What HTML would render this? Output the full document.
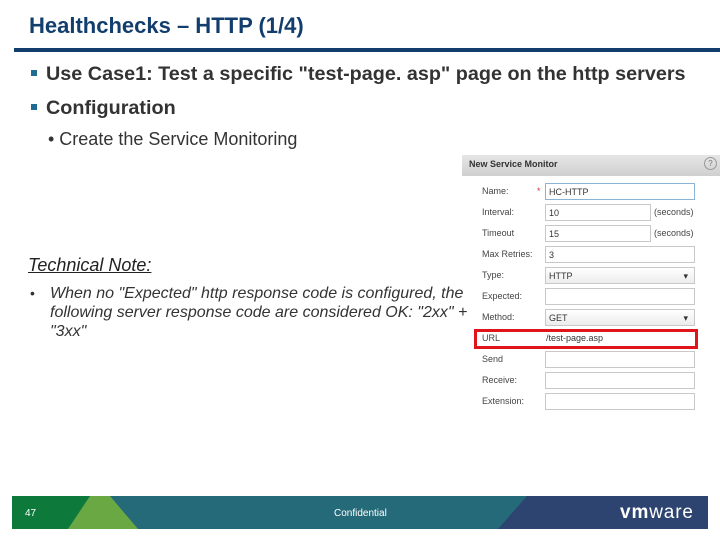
<!DOCTYPE html>
<html><head><style>
body{margin:0;width:720px;height:540px;background:#fff;position:relative;overflow:hidden;font-family:"Liberation Sans",Arial,sans-serif}
.a{position:absolute;white-space:nowrap}
.t{left:29px;top:13px;font-size:22px;font-weight:bold;color:#123e6e}
.ln{left:14px;top:48px;width:706px;height:4px;background:#123e6e}
.b1{font-size:19.8px;font-weight:bold;color:#333}
.sq{width:6px;height:6px;background:#1f6b93}
.lab{font-size:9px;color:#444;left:482px}
.in{left:545px;width:150px;height:17px;border:1px solid #c8c8c8;background:#fff;font-size:9px;color:#333;line-height:17px;padding-left:3px;box-sizing:border-box}
</style></head><body>
<div class="a t">Healthchecks – HTTP (1/4)</div>
<div class="a ln"></div>
<div class="a sq" style="left:31px;top:70px"></div>
<div class="a b1" style="left:46px;top:63px">Use Case1: Test a specific "test-page. asp" page on the http servers</div>
<div class="a sq" style="left:31px;top:104px"></div>
<div class="a b1" style="left:46px;top:97px">Configuration</div>
<div class="a" style="left:48px;top:129px;font-size:18px;color:#333">• Create the Service Monitoring</div>
<div class="a" style="left:28px;top:255px;font-size:18px;font-style:italic;text-decoration:underline;color:#222">Technical Note:</div>
<div class="a" style="left:30px;top:285px;font-size:14px;color:#333">•</div>
<div class="a" style="left:50px;top:284px;font-size:16px;font-style:italic;color:#333;line-height:19px;white-space:normal;width:425px">When no "Expected" http response code is configured, the following server response code are considered OK: "2xx" + "3xx"</div>

<div class="a" style="left:462px;top:155px;width:258px;height:21px;background:linear-gradient(#e6e6e6,#cfcfcf)"></div>
<div class="a" style="left:469px;top:159px;font-size:9px;font-weight:bold;color:#333">New Service Monitor</div>
<div class="a" style="left:704px;top:157px;width:11px;height:11px;border-radius:50%;border:1px solid #999;font-size:8px;color:#777;text-align:center;line-height:11px">?</div>
<div class="a lab" style="top:186px">Name:</div><div class="a" style="left:537px;top:186px;font-size:9px;color:#c33">*</div>
<div class="a in" style="top:183px;border-color:#8ab3d6">HC-HTTP</div>
<div class="a lab" style="top:207px">Interval:</div><div class="a in" style="top:204px;width:106px">10</div><div class="a" style="left:654px;top:207px;font-size:9px;color:#444">(seconds)</div>
<div class="a lab" style="top:228px">Timeout</div><div class="a in" style="top:225px;width:106px">15</div><div class="a" style="left:654px;top:228px;font-size:9px;color:#444">(seconds)</div>
<div class="a lab" style="top:249px">Max Retries:</div><div class="a in" style="top:246px">3</div>
<div class="a lab" style="top:270px">Type:</div><div class="a in" style="top:267px;background:linear-gradient(#fff,#ececec)">HTTP<span style="float:right;margin-right:6px">▾</span></div>
<div class="a lab" style="top:291px">Expected:</div><div class="a in" style="top:288px"></div>
<div class="a lab" style="top:312px">Method:</div><div class="a in" style="top:309px;background:linear-gradient(#fff,#ececec)">GET<span style="float:right;margin-right:6px">▾</span></div>
<div class="a" style="left:474px;top:329px;width:224px;height:20px;border:3px solid #e0141b;box-sizing:border-box"></div>
<div class="a lab" style="top:333px">URL</div><div class="a" style="left:546px;top:333px;font-size:9px;color:#333">/test-page.asp</div>
<div class="a lab" style="top:354px">Send</div><div class="a in" style="top:351px"></div>
<div class="a lab" style="top:375px">Receive:</div><div class="a in" style="top:372px"></div>
<div class="a lab" style="top:396px">Extension:</div><div class="a in" style="top:393px"></div>

<svg class="a" style="left:0;top:0" width="720" height="540">
<polygon points="12,496 708,496 708,529 12,529" fill="#246a78"/>
<polygon points="12,496 90,496 68,529 12,529" fill="#0d7a3c"/>
<polygon points="90,496 110,496 138,529 68,529" fill="#6aa843"/>
<polygon points="527,496 708,496 708,529 498,529" fill="#2d4470"/>
<text x="25" y="516" font-size="10" fill="#fff" font-family="Liberation Sans">47</text>
<text x="334" y="516" font-size="10" fill="#fff" font-family="Liberation Sans">Confidential</text>
<text x="620" y="518" font-size="19" fill="#fff" font-family="Liberation Sans" textLength="73"><tspan font-weight="bold">vm</tspan>ware</text>
</svg>
</body></html>
